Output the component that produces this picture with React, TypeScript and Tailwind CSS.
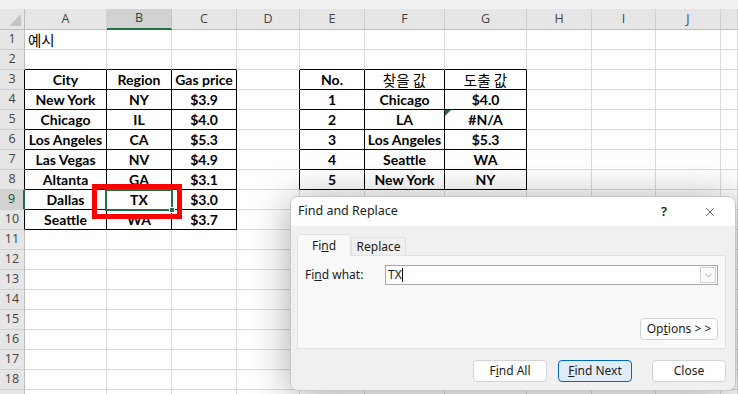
import { X, ChevronDown } from 'lucide-react'

type Kind = 'bold' | 'ko' | 'koHead'
type Cell = { text: string; kind: Kind }

const letters = ['', 'A', 'B', 'C', 'D', 'E', 'F', 'G', 'H', 'I', 'J', '']

const b = (text: string): Cell => ({ text, kind: 'bold' })

// row -> col -> cell
const data: Record<number, Record<number, Cell>> = {
  1: { 1: { text: '예시', kind: 'ko' } },
  3: { 1: b('City'), 2: b('Region'), 3: b('Gas price'), 5: b('No.'), 6: { text: '찾을 값', kind: 'koHead' }, 7: { text: '도출 값', kind: 'koHead' } },
  4: { 1: b('New York'), 2: b('NY'), 3: b('$3.9'), 5: b('1'), 6: b('Chicago'), 7: b('$4.0') },
  5: { 1: b('Chicago'), 2: b('IL'), 3: b('$4.0'), 5: b('2'), 6: b('LA'), 7: b('#N/A') },
  6: { 1: b('Los Angeles'), 2: b('CA'), 3: b('$5.3'), 5: b('3'), 6: b('Los Angeles'), 7: b('$5.3') },
  7: { 1: b('Las Vegas'), 2: b('NV'), 3: b('$4.9'), 5: b('4'), 6: b('Seattle'), 7: b('WA') },
  8: { 1: b('Altanta'), 2: b('GA'), 3: b('$3.1'), 5: b('5'), 6: b('New York'), 7: b('NY') },
  9: { 1: b('Dallas'), 2: b('TX'), 3: b('$3.0') },
  10: { 1: b('Seattle'), 2: b('WA'), 3: b('$3.7') },
}

const inTable = (r: number, c: number) =>
  (r >= 3 && r <= 10 && c >= 1 && c <= 3) || (r >= 3 && r <= 8 && c >= 5 && c <= 7)

const rows = Array.from({ length: 19 }, (_, i) => i + 1)
const cols = Array.from({ length: 11 }, (_, i) => i + 1)

function SheetCell({ r, c }: { r: number; c: number }) {
  const cell = data[r]?.[c]
  const right = inTable(r, c) || inTable(r, c + 1) ? 'border-r-black' : 'border-r-[#dadada]'
  const bottom = inTable(r, c) || inTable(r + 1, c) ? 'border-b-black' : 'border-b-[#dadada]'
  let text = ''
  if (cell?.kind === 'bold') text = "justify-center font-['Lato',sans-serif] font-bold text-[14px]"
  if (cell?.kind === 'koHead') text = "justify-center font-['Noto_Sans_CJK_KR',sans-serif] text-[14.5px]"
  if (cell?.kind === 'ko') text = "justify-start pl-[3px] font-['Noto_Sans_CJK_KR',sans-serif] text-[14.5px] overflow-visible"
  return (
    <div className={`relative h-[20px] border-r border-b ${right} ${bottom} flex items-center whitespace-nowrap text-black ${text}`}>
      {r === 5 && c === 7 && (
        <div className="absolute left-0 top-0 w-0 h-0 border-t-[6px] border-t-[#1e7145] border-r-[6px] border-r-transparent" />
      )}
      {cell?.text}
    </div>
  )
}

function DialogButton({ children, primary }: { children: React.ReactNode; primary?: boolean }) {
  return (
    <div
      className={`w-[74px] h-[22px] rounded-[4px] border flex items-center justify-center ${
        primary ? 'border-[#0067c0] bg-[#e0ecf8]' : 'border-[#d3d3d3] bg-white'
      }`}
    >
      {children}
    </div>
  )
}

export default function App() {
  return (
    <div className="relative w-[738px] h-[394px] overflow-hidden bg-white">
      {/* top strip */}
      <div className="h-[9px] bg-[#f1f1f1]" />

      <div className="grid grid-cols-[25px_82px_65px_65px_63px_65px_80px_82px_65px_64px_65px_17px]">
        {/* column headers */}
        <div className="relative h-[21px] bg-[#e6e6e6] border-r border-b border-[#bdbdbd]">
          <div className="absolute right-[3px] bottom-[3px] w-0 h-0 border-b-[12px] border-b-[#c3c3c3] border-l-[12px] border-l-transparent" />
        </div>
        {cols.map(c => (
          <div
            key={c}
            className={`h-[21px] flex items-center justify-center font-['Open_Sans',sans-serif] text-[12.5px] border-r ${
              c === 2
                ? 'bg-[#d2d2d2] text-[#0f5132] border-r-[#c6c6c6] border-b-2 border-b-[#217346]'
                : 'bg-[#e6e6e6] text-[#444] border-r-[#cfcfcf] border-b border-b-[#bdbdbd]'
            }`}
          >
            {letters[c]}
          </div>
        ))}

        {rows.map(r => (
          <div key={r} className="contents">
            <div
              className={`h-[20px] flex items-center justify-center font-['Open_Sans',sans-serif] text-[12.5px] border-b border-b-[#cfcfcf] ${
                r === 9
                  ? 'bg-[#d2d2d2] text-[#0f5132] border-r-2 border-r-[#217346]'
                  : r >= 3 && r <= 10
                    ? 'bg-[#e6e6e6] text-[#444] border-r border-r-black'
                    : 'bg-[#e6e6e6] text-[#444] border-r border-r-[#bdbdbd]'
              }`}
            >
              {r < 19 ? r : ''}
            </div>
            {cols.map(c => (
              <SheetCell key={c} r={r} c={c} />
            ))}
          </div>
        ))}
      </div>

      {/* selected cell B9 */}
      <div className="absolute left-[105px] top-[189px] w-[68px] h-[22px] border-2 border-[#217346]">
        <div className="absolute -right-[4px] -bottom-[4px] w-[6px] h-[6px] bg-[#217346] border border-white" />
      </div>

      {/* red highlight */}
      <div className="absolute left-[92px] top-[184px] w-[90px] h-[35px] border-[5px] border-[#ff0000]" />

      {/* Find and Replace dialog */}
      <div className="absolute left-[290px] top-[196px] w-[446px] h-[195px] rounded-lg border border-[#c8c8c8] bg-[#f0f0f0] shadow-[0_4px_40px_rgba(0,0,0,0.35)] overflow-hidden flex flex-col font-['Noto_Sans',sans-serif] text-[12px] text-[#1b1b1b]">
        <div className="h-[29px] bg-white flex items-center pl-[7px] pr-[18px]">
          <span className="flex-1 text-[12.5px]">Find and Replace</span>
          <span className="text-[13px] font-semibold mr-[36px]">?</span>
          <X className="w-[14px] h-[14px]" strokeWidth={1.2} />
        </div>

        <div className="flex-1 flex flex-col pl-[6px] pr-[9px] pt-[8px]">
          {/* tabs */}
          <div className="flex items-end h-[21px]">
            <div className="relative z-10 -mb-px w-[54px] h-[22px] bg-[#f9f9f9] border border-b-0 border-[#e2e2e2] rounded-t-[3px] flex items-center justify-center">
              Fi<span className="underline">n</span>d
            </div>
            <div className="w-[55px] h-[18px] bg-[#f0f0f0] border border-b-0 border-[#e2e2e2] flex items-center justify-center">
              Replace
            </div>
          </div>

          {/* panel */}
          <div className="h-[94px] border border-[#e2e2e2] bg-[#f9f9f9] flex flex-col pl-[7px] pr-[7px]">
            <div className="flex items-center mt-[9px]">
              <span className="w-[80px]">
                Fi<span className="underline">n</span>d what:
              </span>
              <div className="flex-1 h-[20px] border border-[#a8a8a8] bg-white flex items-center">
                <span className="pl-[2px] text-[12px]">TX</span>
                <span className="w-px h-[14px] bg-black" />
                <div className="ml-auto mr-px w-[16px] h-[16px] border border-[#cfcfcf] bg-[#fbfbfb] flex items-center justify-center">
                  <ChevronDown className="w-[11px] h-[11px] text-[#666]" strokeWidth={1.3} />
                </div>
              </div>
            </div>
            <div className="mt-auto mb-[8px] self-end w-[78px] h-[22px] rounded-[4px] border border-[#d3d3d3] bg-white flex items-center justify-center">
              Op<span className="underline">t</span>ions &gt; &gt;
            </div>
          </div>

          {/* buttons */}
          <div className="flex justify-end mt-[11px]">
            <div className="mr-[11px]">
              <DialogButton>
                F<span className="underline">i</span>nd All
              </DialogButton>
            </div>
            <div className="mr-[20px]">
              <DialogButton primary>
                <span className="underline">F</span>ind Next
              </DialogButton>
            </div>
            <DialogButton>Close</DialogButton>
          </div>
        </div>
      </div>
    </div>
  )
}
